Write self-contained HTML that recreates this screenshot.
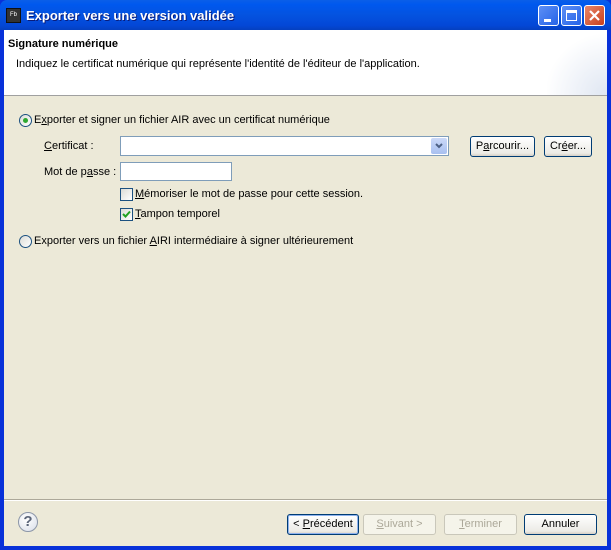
<!DOCTYPE html>
<html><head><style>
*{margin:0;padding:0;box-sizing:border-box}
body{width:611px;height:550px;overflow:hidden;background:#0831d9;font-family:Tahoma,"Liberation Sans",sans-serif;font-size:11px;color:#000;position:relative}
.title{position:absolute;left:0;top:0;width:611px;height:30px;background:linear-gradient(#0a5fe8,#0058ee 15%,#0453e0 50%,#0347d6 85%,#0440c0);border-radius:7px 7px 0 0}
.title .t{position:absolute;left:26px;top:8px;color:#fff;font-weight:bold;font-size:13px;text-shadow:1px 1px #0a1c7a}
.fb{position:absolute;left:6px;top:8px;width:15px;height:15px;background:#333;border:1px solid #111;color:#fff;font-size:6px;line-height:13px;text-align:center}
.wb{position:absolute;top:5px;width:21px;height:21px;border:1px solid #fff;border-radius:3px;background:linear-gradient(135deg,#5d8ff5,#2563e8)}
.inner{position:absolute;left:4px;top:30px;width:603px;height:516px;background:#ece9d8}
.hdr{position:absolute;left:0;top:0;width:603px;height:66px;background:#fff;border-bottom:1px solid #a0a0a0}
.lbl{position:absolute;white-space:nowrap}
.in{position:absolute;background:#fff;border:1px solid #7f9db9}
.btn{position:absolute;height:21px;border:1px solid #003c74;border-radius:3px;background:linear-gradient(#fff,#ecebe6 85%,#d6d0c5);text-align:center;line-height:19px}
.dis{border-color:#c9c7ba;color:#aca899;background:#f5f4ea}
.rad{position:absolute;width:13px;height:13px;border-radius:50%;border:1px solid #1c5180;background:linear-gradient(135deg,#dcdcd6,#fff)}
.chk{position:absolute;width:13px;height:13px;border:1px solid #1c5180;background:linear-gradient(135deg,#dcdcd6,#fff)}
u{text-decoration:underline}
</style></head><body>
<div class="title"><div class="fb">Fb</div><div class="t">Exporter vers une version validée</div>
<div class="wb" style="left:538px"><div style="position:absolute;left:5px;top:13px;width:7px;height:3px;background:#fff"></div></div>
<div class="wb" style="left:561px"><div style="position:absolute;left:4px;top:4px;width:11px;height:11px;border:1px solid #fff;border-top-width:3px"></div></div>
<div class="wb" style="left:584px;background:linear-gradient(135deg,#e8866a,#c9401b)"><svg width="19" height="19" style="position:absolute;left:0;top:0"><path d="M5 5L14 14M14 5L5 14" stroke="#fff" stroke-width="2.2"/></svg></div>
</div>
<div class="inner">
<div class="hdr">
<div style="position:absolute;right:0;top:0;width:60px;height:65px;background:radial-gradient(circle at 100% 100%,#dfe6f2,#fff 70%)"></div>
<div class="lbl" style="left:4px;top:8px;font-weight:bold">Signature numérique</div>
<div class="lbl" style="left:12px;top:28px">Indiquez le certificat numérique qui représente l'identité de l'éditeur de l'application.</div>
</div>
<div class="rad" style="left:15px;top:84px"><div style="position:absolute;left:3px;top:3px;width:5px;height:5px;border-radius:50%;background:#2fa830"></div></div>
<div class="lbl" style="left:30px;top:84px">E<u>x</u>porter et signer un fichier AIR avec un certificat numérique</div>
<div class="lbl" style="left:40px;top:110px"><u>C</u>ertificat :</div>
<div class="in" style="left:116px;top:106px;width:329px;height:20px"><div style="position:absolute;right:1px;top:1px;width:16px;height:16px;background:linear-gradient(#cbd9f8,#a8c0f0);border-radius:2px"><svg width="16" height="16"><path d="M5 6L8 9L11 6" stroke="#4d6185" stroke-width="2" fill="none"/></svg></div></div>
<div class="btn" style="left:466px;top:106px;width:65px">P<u>a</u>rcourir...</div>
<div class="btn" style="left:540px;top:106px;width:48px">Cr<u>é</u>er...</div>
<div class="lbl" style="left:40px;top:136px">Mot de p<u>a</u>sse :</div>
<div class="in" style="left:116px;top:132px;width:112px;height:19px"></div>
<div class="chk" style="left:116px;top:158px"></div>
<div class="lbl" style="left:131px;top:158px"><u>M</u>émoriser le mot de passe pour cette session.</div>
<div class="chk" style="left:116px;top:178px"><svg width="11" height="11" style="position:absolute;left:0;top:0"><path d="M2 5L4.5 7.5L9 2.5" stroke="#21a121" stroke-width="2" fill="none"/></svg></div>
<div class="lbl" style="left:131px;top:178px"><u>T</u>ampon temporel</div>
<div class="rad" style="left:15px;top:205px"></div>
<div class="lbl" style="left:30px;top:205px">Exporter vers un fichier <u>A</u>IRI intermédiaire à signer ultérieurement</div>
<div style="position:absolute;left:0;top:469px;width:603px;height:2px;border-top:1px solid #aca899;border-bottom:1px solid #fff"></div>
<div style="position:absolute;left:14px;top:482px;width:20px;height:20px;border-radius:50%;border:1px solid #8c96a8;background:radial-gradient(circle at 40% 35%,#fff,#d8dde8);text-align:center;font-weight:bold;font-size:15px;line-height:18px;color:#5a6478">?</div>
<div class="btn" style="left:283px;top:484px;width:72px;border-color:#003c74;box-shadow:inset 0 0 0 1px #8eb2ee">&lt; <u>P</u>récédent</div>
<div class="btn dis" style="left:359px;top:484px;width:73px"><u>S</u>uivant &gt;</div>
<div class="btn dis" style="left:440px;top:484px;width:73px"><u>T</u>erminer</div>
<div class="btn" style="left:520px;top:484px;width:73px">Annuler</div>
</div>
</body></html>
